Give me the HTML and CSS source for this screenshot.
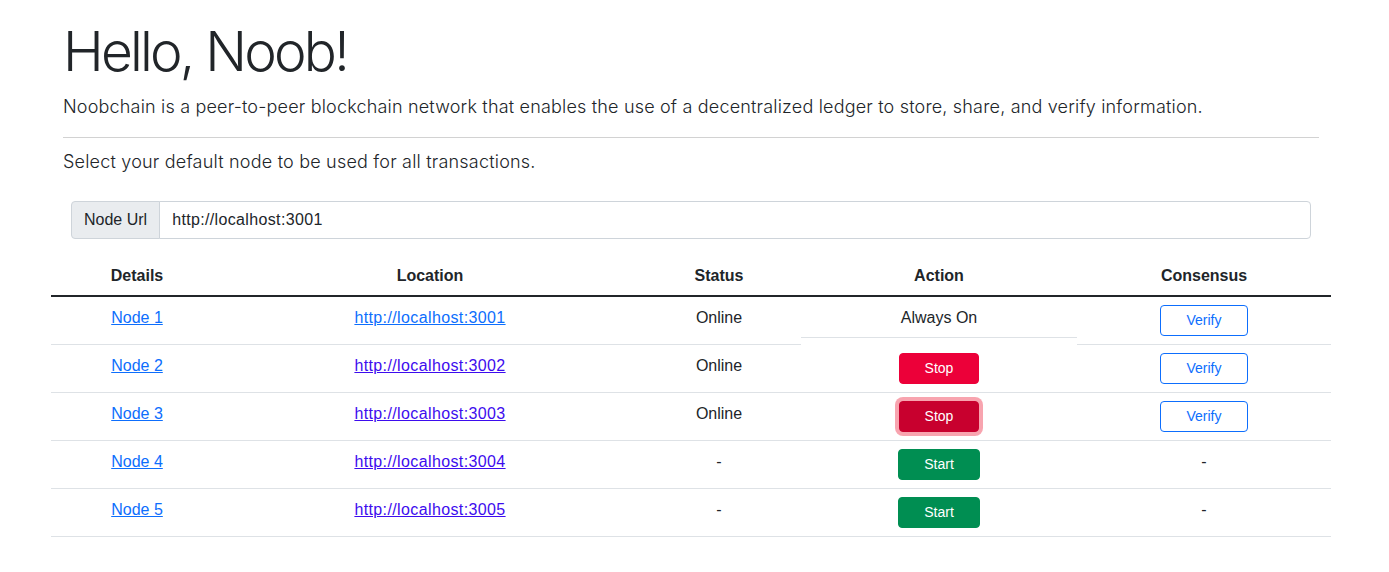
FILE: index.html
```html
<!DOCTYPE html>
<html lang="en">
<head>
<meta charset="utf-8">
<title>Noobchain</title>
<link rel="stylesheet" href="styles.css">
</head>
<body>
<main class="page">
  <section class="intro">
    <h1 class="display">Hello, Noob!</h1>
    <p class="lead">Noobchain is a peer-to-peer blockchain network that enables the use of a decentralized ledger to store, share, and verify information.</p>
    <hr class="rule">
    <p class="select-text">Select your default node to be used for all transactions.</p>
  </section>

  <div class="input-group">
    <span class="addon">Node Url</span>
    <input class="control" type="text" value="http://localhost:3001">
  </div>

  <table class="nodes">
    <colgroup>
      <col class="c-details">
      <col class="c-location">
      <col class="c-status">
      <col class="c-action">
      <col class="c-consensus">
    </colgroup>
    <thead>
      <tr>
        <th>Details</th>
        <th>Location</th>
        <th>Status</th>
        <th>Action</th>
        <th>Consensus</th>
      </tr>
    </thead>
    <tbody>
      <tr>
        <td><a class="link" href="#">Node 1</a></td>
        <td><a class="link url" href="#">http://localhost:3001</a></td>
        <td>Online</td>
        <td class="always">Always On</td>
        <td><button class="btn btn-verify">Verify</button></td>
      </tr>
      <tr>
        <td><a class="link" href="#">Node 2</a></td>
        <td><a class="link url visited" href="#">http://localhost:3002</a></td>
        <td>Online</td>
        <td><button class="btn btn-stop">Stop</button></td>
        <td><button class="btn btn-verify">Verify</button></td>
      </tr>
      <tr>
        <td><a class="link" href="#">Node 3</a></td>
        <td><a class="link url visited" href="#">http://localhost:3003</a></td>
        <td>Online</td>
        <td><button class="btn btn-stop focused">Stop</button></td>
        <td><button class="btn btn-verify">Verify</button></td>
      </tr>
      <tr>
        <td><a class="link" href="#">Node 4</a></td>
        <td><a class="link url visited" href="#">http://localhost:3004</a></td>
        <td>-</td>
        <td><button class="btn btn-start">Start</button></td>
        <td>-</td>
      </tr>
      <tr>
        <td><a class="link" href="#">Node 5</a></td>
        <td><a class="link url visited" href="#">http://localhost:3005</a></td>
        <td>-</td>
        <td><button class="btn btn-start">Start</button></td>
        <td>-</td>
      </tr>
    </tbody>
  </table>
</main>
</body>
</html>
```

FILE: styles.css
```css
* { box-sizing: border-box; }

html, body {
  margin: 0;
  padding: 0;
  background: #fff;
  color: #212529;
  font-family: "Liberation Sans", Arial, Helvetica, sans-serif;
  font-size: 16px;
  line-height: 1.5;
}

.page {
  width: 1280px;
  margin-left: 51px;
  padding-bottom: 30px;
}

.intro {
  padding: 0 12px;
  font-family: Inter, "Noto Sans", sans-serif;
}

.display {
  margin: 18px 0 11px;
  font-size: 55px;
  font-weight: 300;
  line-height: 1.2;
  letter-spacing: -2.8px;
}

.lead {
  margin: 0;
  font-size: 18px;
  font-weight: 300;
  line-height: 24px;
  letter-spacing: 0.18px;
}

.rule {
  margin: 18px 0 12px;
  border: 0;
  border-top: 1px solid #d2d2d2;
  height: 0;
}

.select-text {
  margin: 0 0 27px;
  font-size: 18px;
  font-weight: 300;
  line-height: 24px;
  letter-spacing: 0.2px;
}

.input-group {
  display: flex;
  margin: 0 20px;
  height: 38px;
}

.addon {
  display: flex;
  align-items: center;
  padding: 6px 12px;
  background: #e9ecef;
  border: 1px solid #ced4da;
  border-radius: 4px 0 0 4px;
  color: #212529;
  font-size: 16px;
  white-space: nowrap;
}

.control {
  flex: 1;
  margin-left: -1px;
  padding: 6px 12px;
  border: 1px solid #ced4da;
  border-radius: 0 4px 4px 0;
  font-family: "Liberation Sans", Arial, Helvetica, sans-serif;
  font-size: 16px;
  letter-spacing: 0.35px;
  color: #212529;
  background: #fff;
  outline: none;
}

.nodes {
  width: 1280px;
  margin-top: 16px;
  border-collapse: collapse;
  table-layout: fixed;
  vertical-align: top;
}

.c-details { width: 172px; }
.c-location { width: 414px; }
.c-status { width: 164px; }
.c-action { width: 276px; }
.c-consensus { width: 254px; }

.nodes th,
.nodes td {
  padding: 9px 8px 7px;
  text-align: center;
  vertical-align: top;
  border-bottom: 1px solid #dee2e6;
}

.nodes th {
  font-weight: 700;
  border-bottom: 2px solid #212529;
}

.nodes td.always {
  border-bottom-color: #fff;
  background: linear-gradient(to top, transparent 6px, #dee2e6 6px, #dee2e6 7px, transparent 7px);
}

.link {
  color: #0d6efd;
  text-decoration: underline;
}

.link.url {
  letter-spacing: 0.38px;
}

.link.visited {
  color: #3d0cee;
}

.btn {
  display: inline-block;
  margin: -1px 0 1px;
  padding: 4px 25px;
  font-family: "Liberation Sans", Arial, Helvetica, sans-serif;
  font-size: 14px;
  line-height: 21px;
  border: 1px solid transparent;
  border-radius: 4px;
  cursor: pointer;
  vertical-align: top;
}

.btn-stop {
  background: #ec0039;
  border-color: #ec0039;
  color: #fff;
}

.btn-stop.focused {
  background: #c8002e;
  border-color: #c8002e;
  box-shadow: 0 0 0 4px rgba(241, 74, 96, 0.5);
}

.btn-start {
  background: #008e52;
  border-color: #008e52;
  color: #fff;
}

.btn-verify {
  background: #fff;
  border-color: #0d6efd;
  color: #0d6efd;
}
```
